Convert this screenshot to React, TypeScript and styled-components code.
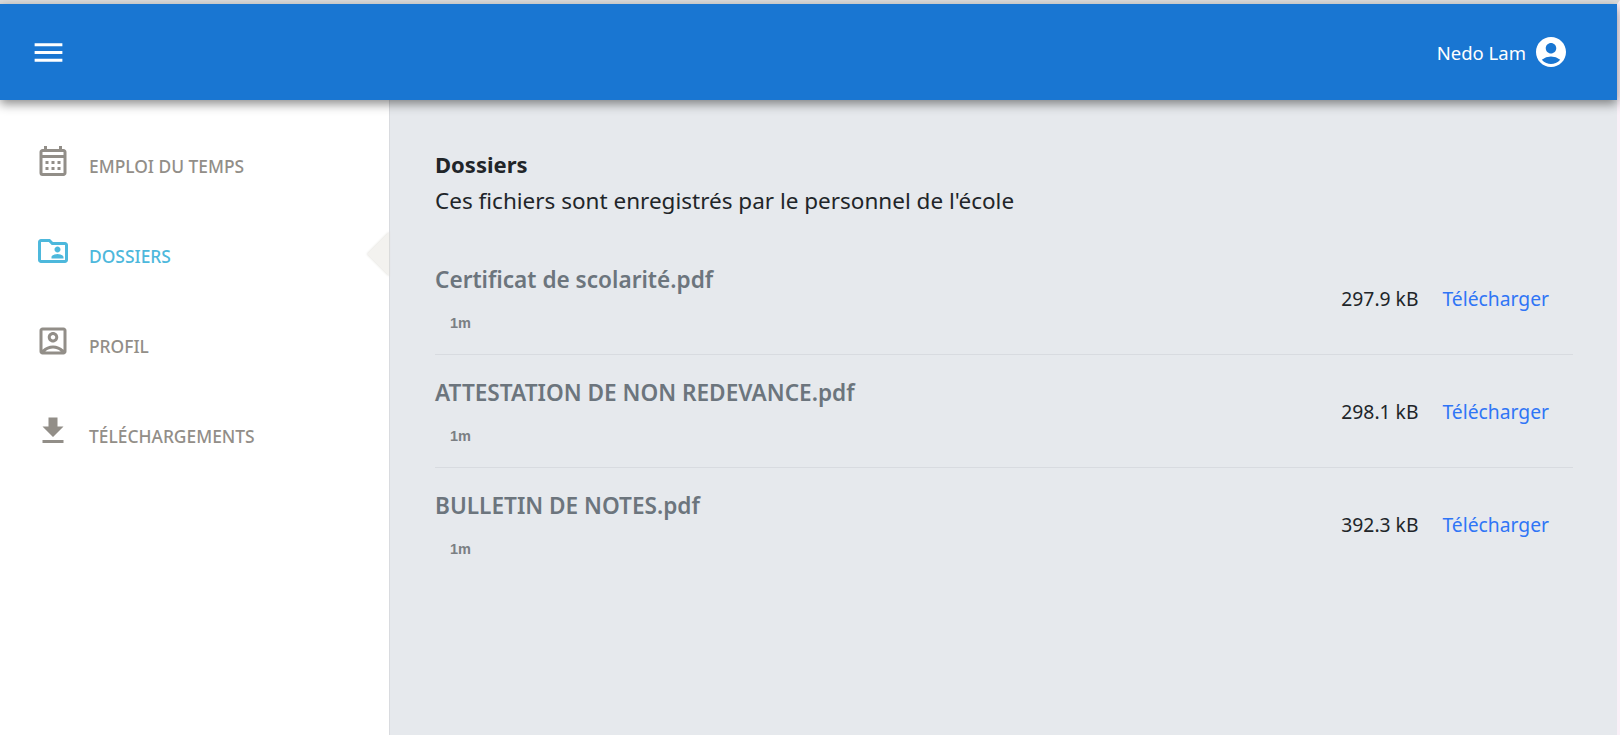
import React from 'react';
import styled, { createGlobalStyle } from 'styled-components';
import {
  MdMenu,
  MdAccountCircle,
  MdOutlineCalendarMonth,
  MdOutlineFolderShared,
  MdOutlineAccountBox,
  MdFileDownload,
} from 'react-icons/md';

const GlobalStyle = createGlobalStyle`
  html, body {
    margin: 0;
    padding: 0;
    height: 100%;
    overflow: hidden;
    background: #fff;
  }
  body {
    font-family: 'Noto Sans', 'Open Sans', sans-serif;
  }
`;

const Page = styled.div`
  display: flex;
  flex-direction: column;
  width: 1620px;
  height: 735px;
  box-sizing: border-box;
  border-top: 4px solid #dcdcdc;
  border-right: 3px solid #fbf0f8;
  background: #fff;
`;

const TopBar = styled.header`
  position: relative;
  z-index: 2;
  flex: 0 0 96px;
  display: flex;
  align-items: center;
  justify-content: space-between;
  padding: 0 48px 0 30px;
  color: #fff;
  background: #1976d2;
  box-shadow: 0 4px 10px rgba(0, 0, 0, 0.45);
`;

const UserBox = styled.div`
  display: flex;
  align-items: center;
  gap: 7px;
  font-size: 18.5px;
`;

const Body = styled.div`
  flex: 1;
  display: flex;
  min-height: 0;
`;

const Sidebar = styled.nav`
  position: relative;
  flex: 0 0 390px;
  box-sizing: border-box;
  padding-top: 16px;
  background: #fff;
  border-right: 1px solid #d9dbdf;
`;

const NavItem = styled.a<{ $active?: boolean }>`
  display: flex;
  align-items: center;
  gap: 18px;
  height: 90px;
  padding-left: 35px;
  box-sizing: border-box;
  color: ${({ $active }) => ($active ? '#4db8dc' : '#928e88')};
  font-size: 17.4px;
  font-weight: 500;
  text-transform: uppercase;
  white-space: nowrap;
`;

const NavLabel = styled.span`
  position: relative;
  top: 5px;
`;

const ActiveMark = styled.span`
  position: absolute;
  top: 132px;
  right: 0;
  width: 0;
  height: 0;
  border-top: 22px solid transparent;
  border-bottom: 22px solid transparent;
  border-right: 22px solid #f3f2ef;
  filter: drop-shadow(0 0 1px #dedcd6);
`;

const Main = styled.main`
  flex: 1;
  min-width: 0;
  box-sizing: border-box;
  padding: 49px 44px 0 45px;
  background: #e6e9ed;
  color: #212529;
`;

const Title = styled.h1`
  margin: 0 0 4px;
  font-size: 22px;
  line-height: 30px;
  font-weight: 700;
`;

const Subtitle = styled.p`
  margin: 0 0 23px;
  font-size: 22.5px;
  line-height: 36px;
`;

const FileRow = styled.div`
  display: flex;
  align-items: center;
  justify-content: space-between;
  height: 113px;
  box-sizing: border-box;
  border-bottom: 1px solid #d8dbe0;
  &:last-child {
    border-bottom: none;
  }
`;

const FileInfo = styled.div`
  display: flex;
  flex-direction: column;
  align-self: flex-start;
  padding-top: 23px;
`;

const FileName = styled.span`
  font-size: 22.6px;
  line-height: 30px;
  font-weight: 600;
  color: #6c757d;
`;

const FileAge = styled.span`
  margin: 19px 0 0 15px;
  font-family: 'Liberation Sans', Arial, sans-serif;
  font-size: 14.5px;
  line-height: 18px;
  font-weight: 700;
  color: #7b7f83;
`;

const FileActions = styled.div`
  display: flex;
  align-items: center;
  gap: 24px;
  padding-right: 24px;
  font-size: 19.3px;
`;

const Download = styled.a`
  color: #2f75f6;
`;

const navItems = [
  { label: 'Emploi du temps', icon: <MdOutlineCalendarMonth size={36} /> },
  { label: 'Dossiers', icon: <MdOutlineFolderShared size={36} />, active: true },
  { label: 'Profil', icon: <MdOutlineAccountBox size={36} /> },
  { label: 'Téléchargements', icon: <MdFileDownload size={36} /> },
];

const files = [
  { name: 'Certificat de scolarité.pdf', size: '297.9 kB' },
  { name: 'ATTESTATION DE NON REDEVANCE.pdf', size: '298.1 kB' },
  { name: 'BULLETIN DE NOTES.pdf', size: '392.3 kB' },
];

const App = () => {
  return (
    <Page>
      <GlobalStyle />
      <TopBar>
        <MdMenu size={37} />
        <UserBox>
          Nedo Lam
          <MdAccountCircle size={36} />
        </UserBox>
      </TopBar>
      <Body>
        <Sidebar>
          {navItems.map((item) => (
            <NavItem key={item.label} $active={item.active}>
              {item.icon}
              <NavLabel>{item.label}</NavLabel>
            </NavItem>
          ))}
          <ActiveMark />
        </Sidebar>
        <Main>
          <Title>Dossiers</Title>
          <Subtitle>Ces fichiers sont enregistrés par le personnel de l'école</Subtitle>
          {files.map((file) => (
            <FileRow key={file.name}>
              <FileInfo>
                <FileName>{file.name}</FileName>
                <FileAge>1m</FileAge>
              </FileInfo>
              <FileActions>
                <span>{file.size}</span>
                <Download>Télécharger</Download>
              </FileActions>
            </FileRow>
          ))}
        </Main>
      </Body>
    </Page>
  );
};

export default App;
